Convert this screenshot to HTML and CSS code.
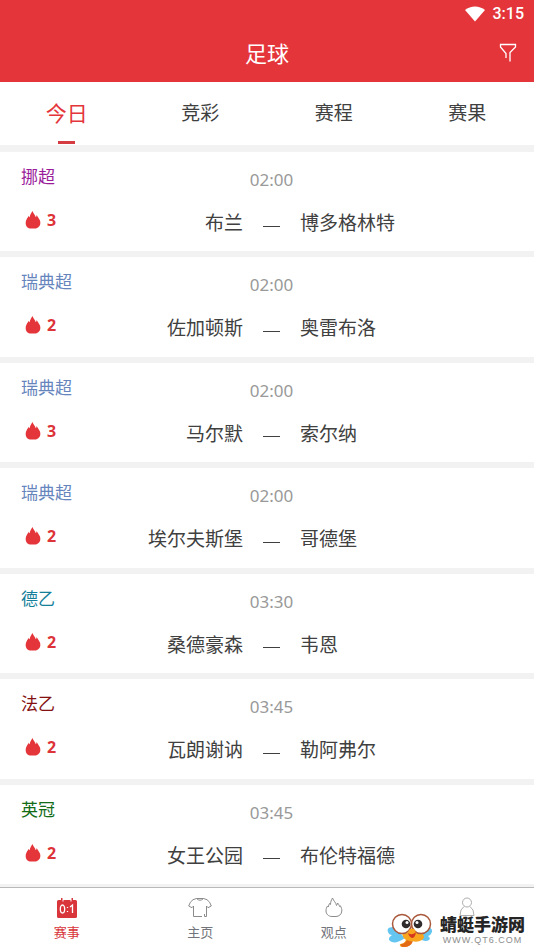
FILE: index.html
```html
<!DOCTYPE html>
<html lang="zh-CN">
<head>
<meta charset="utf-8">
<meta name="viewport" content="width=device-width, initial-scale=1">
<title>足球</title>
<link rel="stylesheet" href="styles.css">
</head>
<body>
<svg class="symbols" aria-hidden="true">
  <symbol id="flame" viewBox="0 0 16 18"><path d="M7.500 0C8.300 2.500 10.300 4 10.800 6.200c.6-.6.8-1.300.8-2.200C12.500 5.500 13.300 6.500 13.800 7.500 15 9 15.500 10.500 15.300 12.500 15 16 12 17.500 10 17.500H6C3 17.500.8 15.500.7 12.500.6 10.500 1.200 9 2 7.500 2.700 6.500 3.200 6 3.600 4.800c.2.700.5 1.200 1 1.500C5 3.800 6.200 2 7.500 0z"/></symbol>
</svg>
<div class="screen">
  <header class="header">
    <div class="status">
      <svg class="wifi" viewBox="0 0 20 16" aria-hidden="true"><path d="M0 4C5.500-.8 14.500-.8 20 4L10 15.500z"/></svg>
      <span>3:15</span>
    </div>
    <div class="titlebar">
      <h1>足球</h1>
      <button class="filter" aria-label="筛选"><svg viewBox="0 0 18 20" aria-hidden="true"><path d="M7 15V10.500L1.500 4V1.500h15V4L11 9.500V18.500"/></svg></button>
    </div>
  </header>
  <nav class="tabs">
    <button class="tab active">今日</button>
    <button class="tab">竞彩</button>
    <button class="tab">赛程</button>
    <button class="tab">赛果</button>
  </nav>
  <main class="matches">
    <article class="match">
      <span class="league purple">挪超</span><time>02:00</time>
      <div class="home"><span class="heat"><svg><use href="#flame"/></svg>3</span><span>布兰</span></div><span class="dash"></span><span class="away">博多格林特</span>
    </article>
    <article class="match">
      <span class="league blue">瑞典超</span><time>02:00</time>
      <div class="home"><span class="heat"><svg><use href="#flame"/></svg>2</span><span>佐加顿斯</span></div><span class="dash"></span><span class="away">奥雷布洛</span>
    </article>
    <article class="match">
      <span class="league blue">瑞典超</span><time>02:00</time>
      <div class="home"><span class="heat"><svg><use href="#flame"/></svg>3</span><span>马尔默</span></div><span class="dash"></span><span class="away">索尔纳</span>
    </article>
    <article class="match">
      <span class="league blue">瑞典超</span><time>02:00</time>
      <div class="home"><span class="heat"><svg><use href="#flame"/></svg>2</span><span>埃尔夫斯堡</span></div><span class="dash"></span><span class="away">哥德堡</span>
    </article>
    <article class="match">
      <span class="league teal">德乙</span><time>03:30</time>
      <div class="home"><span class="heat"><svg><use href="#flame"/></svg>2</span><span>桑德豪森</span></div><span class="dash"></span><span class="away">韦恩</span>
    </article>
    <article class="match">
      <span class="league maroon">法乙</span><time>03:45</time>
      <div class="home"><span class="heat"><svg><use href="#flame"/></svg>2</span><span>瓦朗谢讷</span></div><span class="dash"></span><span class="away">勒阿弗尔</span>
    </article>
    <article class="match">
      <span class="league green">英冠</span><time>03:45</time>
      <div class="home"><span class="heat"><svg><use href="#flame"/></svg>2</span><span>女王公园</span></div><span class="dash"></span><span class="away">布伦特福德</span>
    </article>
  </main>
  <nav class="bottom">
    <a class="item current" href="#matches">
      <svg class="icon" viewBox="0 0 24 22" aria-hidden="true"><path class="fill" d="M3.500 3H6V1h1.500v3.500h1V3h7v1.500h1V1H18v2h2.500Q22 3 22 4.500v15q0 1.500-1.500 1.500h-17Q2 21 2 19.500v-15Q2 3 3.500 3z"/><path class="score" d="M7.500 8C4.600 8 4.600 16 7.500 16S10.400 8 7.500 8zM12.500 10v1M12.500 14v1M15 10l2.500-2v8"/></svg>
      <span>赛事</span>
    </a>
    <a class="item" href="#home">
      <svg class="icon" viewBox="0 0 24 22" aria-hidden="true"><path d="M8.500 1.500Q12 5 15.500 1.500L19 2.700Q22 4.500 23.300 9L20 10.700 18.500 9V19.500H16.500V17M14 19.500H5.500V9L4 10.700.7 9Q2 4.500 5 2.700L8.500 1.500h7"/></svg>
      <span>主页</span>
    </a>
    <a class="item" href="#views">
      <svg class="icon" viewBox="0 0 24 22" aria-hidden="true"><path d="M10.500 1C11.500 4 14 5.500 14.500 8.500c.8-.7 1-1.700 1-2.500 1.200 1 1.500 2 2 3.500l.8-.8c1 1.800 1.700 3.500 1.500 5.300-.2 3.500-3 5.500-5.800 5.500h-4C6.500 19.500 4 17 4 14c0-2 .5-3.500 1.500-5l.8 1C6.500 8.500 7 7.500 7.500 6.500l1 1C8.500 5 9.300 3 10.500 1z"/></svg>
      <span>观点</span>
    </a>
    <a class="item" href="#me" aria-label="个人中心">
      <svg class="icon faint" viewBox="0 0 24 22" aria-hidden="true"><circle cx="12" cy="5.500" r="4.500"/><path d="M9 9.500Q5 12 5 18.500h14Q19 12 15 9.500"/></svg>
    </a>
    <div class="brand">
      <svg class="mascot" viewBox="0 0 46 36" aria-hidden="true">
        <path fill="#64c5f1" d="M7 15Q-1 15 1 20q1 3 4 3-5 3-2 6 5 4 15-3zM38 15q8 0 7 5-1 3-4 4 3 2 1 4-4 3-12-3z"/>
        <path fill="#f9a51e" d="M15 20l20 1q4 4 0 7-5 3-10 1-2 6-9 6-4 0-3-3 4 0 6-4-4-3-4-8z"/>
        <path fill="#e46b16" d="M20 28q3 2 6 1-2 6-9 6-4 0-3-3 4 0 6-4z"/>
        <circle cx="15" cy="12" r="9.500" fill="#fff" stroke="#a9583b" stroke-width="1.500"/>
        <circle cx="34" cy="12" r="9.500" fill="#fff" stroke="#a9583b" stroke-width="1.500"/>
        <circle cx="19" cy="12" r="4.300" fill="#302b2d"/><circle cx="31" cy="12" r="4.300" fill="#302b2d"/>
        <circle cx="20" cy="10.500" r="1.500" fill="#fff"/><circle cx="30" cy="10.500" r="1.500" fill="#fff"/>
        <path fill="#f9a51e" d="M22 18q3-3 6 0l2 5h-10z"/>
        <path fill="#d6381f" d="M21 21q4 3 8-1-1 6-4 6-3-1-4-5z"/>
      </svg>
      <div class="wordmark"><strong>蜻蜓手游网</strong><small>WWW.QT6.COM</small></div>
    </div>
  </nav>
</div>
</body>
</html>
```
FILE: styles.css
```css
* { box-sizing: border-box; }
body {
  margin: 0;
  color: #404040;
  background: #fff;
  font-family: "Noto Sans", "Noto Sans CJK SC", sans-serif;
}
button { padding: 0; border: 0; background: none; color: inherit; font: inherit; }
svg { display: block; }
.symbols { position: absolute; width: 0; height: 0; }
.screen { display: flex; flex-direction: column; min-height: 100vh; }

.header { background: #e4353a; color: #fff; padding-bottom: 8px; }
.status {
  display: flex; justify-content: flex-end; align-items: center; gap: 8px;
  height: 28px; padding-right: 10px;
  font: 500 16px/28px Roboto, sans-serif;
}
.wifi { width: 20px; height: 16px; fill: #fff; }
.titlebar {
  display: grid; grid-template-columns: 1fr auto 1fr; align-items: center;
  height: 46px; padding: 4px 17px 0;
}
h1 { grid-column: 2; margin: 0; font-size: 22px; font-weight: 400; line-height: 32px; }
.filter { justify-self: end; }
.filter svg { width: 18px; height: 20px; fill: none; stroke: #fff; stroke-width: 1.3; }

.tabs { display: flex; border-bottom: 7px solid #f2f2f2; }
.tab {
  flex: 1; display: flex; flex-direction: column; align-items: center;
  height: 63px; padding-top: 16px; font-size: 19px; line-height: 30px;
}
.tab.active { color: #e4353a; font-size: 21px; }
.tab.active::after { content: ""; width: 17px; height: 3px; margin-top: 13px; background: #d43c41; }

.matches {
  flex: 1; display: grid; grid-auto-rows: 1fr; gap: 6px;
  padding-bottom: 3px; background: #f2f2f2;
}
.match {
  display: grid; grid-template-columns: 1fr 57px 1fr; grid-template-rows: 34px 30px;
  align-items: center; align-content: start; row-gap: 11px;
  padding: 11px 12px 10px 21px; background: #fff;
  font-size: 19px; line-height: 28px;
}
.league { align-self: start; font-size: 17px; }
.purple { color: #9b1c9b; }
.blue { color: #6685bd; }
.teal { color: #16809b; }
.maroon { color: #851012; }
.green { color: #126c18; }
time { grid-column: 2 / 4; width: 57px; text-align: center; color: #999; font-size: 17px; }
.home { display: flex; justify-content: space-between; align-items: center; }
.heat {
  display: flex; align-items: center; align-self: flex-start; gap: 6px; padding-left: 4px;
  color: #dd3439; font-size: 16px; font-weight: 700; line-height: 22px;
}
.heat svg { width: 16px; height: 18px; fill: #e4353a; }
.dash { justify-self: center; width: 17px; height: 1px; margin-top: 6px; background: #404040; }

.bottom { position: relative; display: flex; height: 62px; border-top: 1px solid #b9b9b9; background: #fff; }
.item {
  flex: 1; display: flex; flex-direction: column; align-items: center; gap: 3px;
  padding-top: 9px; color: #72747a; font-size: 13px; line-height: 20px; text-decoration: none;
}
.icon { width: 24px; height: 22px; fill: none; stroke: #8b8b8b; stroke-width: 1; }
.current { color: #d83439; }
.icon .fill { fill: #d9363c; stroke: none; }
.icon .score { stroke: #fff; stroke-width: 1.3; }
.faint { opacity: .7; }
.brand { position: absolute; right: 9px; bottom: 1px; display: flex; align-items: center; gap: 7px; }
.mascot { width: 46px; height: 36px; }
.wordmark { display: flex; flex-direction: column; align-items: center; }
.wordmark strong { color: #252525; font-size: 17px; font-weight: 900; line-height: 20px; }
.wordmark small { color: #8c8c8c; font: 9px/10px "Liberation Sans", sans-serif; letter-spacing: 1px; }
```
